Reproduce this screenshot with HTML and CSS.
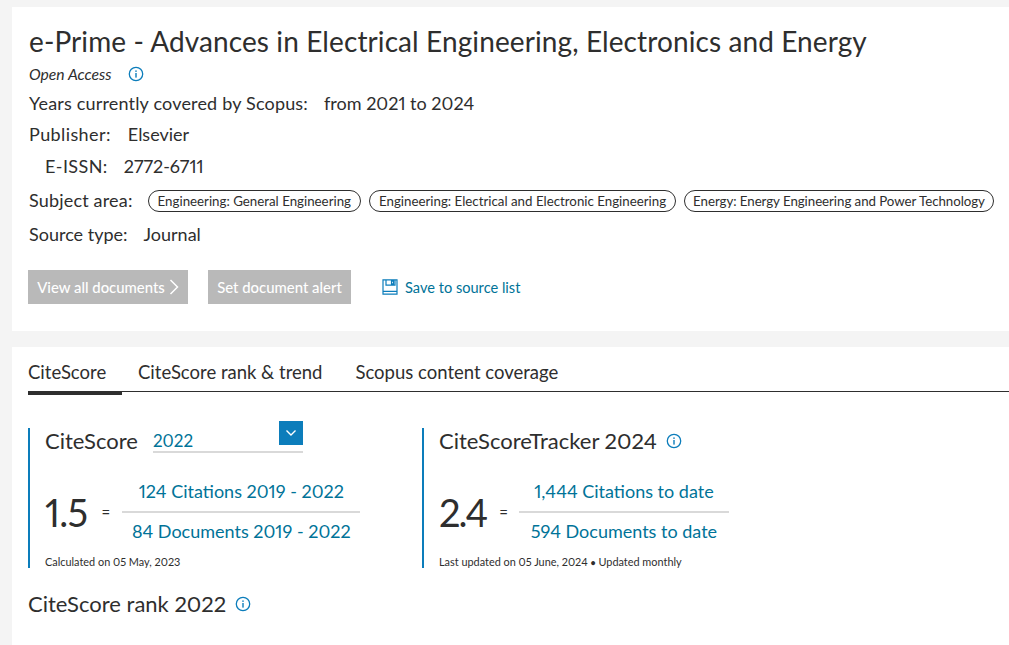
FILE: index.html
```html
<!DOCTYPE html>
<html lang="en">
<head>
<meta charset="utf-8">
<title>e-Prime - Scopus source details</title>
<link rel="stylesheet" href="styles.css">
</head>
<body>
<svg class="sprite" width="0" height="0" aria-hidden="true">
  <symbol id="info" viewBox="0 0 16 16">
    <circle cx="8" cy="8" r="6.7" fill="none" stroke="currentColor" stroke-width="1.3"/>
    <rect x="7.3" y="7" width="1.4" height="4.6" fill="currentColor"/>
    <rect x="7.3" y="4.4" width="1.4" height="1.5" fill="currentColor"/>
  </symbol>
</svg>
<main class="page">
  <section class="card head">
    <h1 class="title">e-Prime - Advances in Electrical Engineering, Electronics and Energy</h1>
    <div class="oa"><em>Open Access</em><svg class="info oa-info"><use href="#info"/></svg></div>
    <div class="row years"><span class="label">Years currently covered by Scopus:</span><span>from 2021 to 2024</span></div>
    <div class="row publisher"><span class="label">Publisher:</span><span>Elsevier</span></div>
    <div class="row issn"><span class="label">E-ISSN:</span><span class="issn-value">2772-6711</span></div>
    <div class="row subject"><span class="label">Subject area:</span>
      <div class="tags">
        <span class="tag">Engineering: General Engineering</span>
        <span class="tag">Engineering: Electrical and Electronic Engineering</span>
        <span class="tag">Energy: Energy Engineering and Power Technology</span>
      </div>
    </div>
    <div class="row stype"><span>Source type:</span><span>Journal</span></div>
    <div class="actions">
      <a class="btn btn-view">View all documents<svg class="chev" viewBox="0 0 10 16"><path d="M1.5 1 8.5 8 1.5 15" fill="none" stroke="currentColor" stroke-width="1.5"/></svg></a>
      <a class="btn btn-alert">Set document alert</a>
      <a class="save"><svg class="save-ic" viewBox="0 0 16 16"><path d="M1 .8h14v14.4H1z M4 .8v5.4h9V.8 M9.5 2.2h2v2.6h-2z M1 12.4h14" fill="none" stroke="currentColor" stroke-width="1.2"/></svg>Save to source list</a>
    </div>
  </section>

  <section class="card body">
    <nav class="tabs">
      <span class="tab active">CiteScore</span>
      <span class="tab">CiteScore rank &amp; trend</span>
      <span class="tab">Scopus content coverage</span>
    </nav>
    <div class="scores">
      <div class="score first">
        <div class="score-head">
          <h2>CiteScore</h2>
          <div class="select"><span>2022</span><span class="select-btn"><svg viewBox="0 0 12 8"><path d="M1.5 1.5 6 6l4.5-4.5" fill="none" stroke="currentColor" stroke-width="1.4"/></svg></span></div>
        </div>
        <div class="formula">
          <span class="value">1.5</span><span class="eq">=</span>
          <div class="fraction wide">
            <a>124 Citations 2019 - 2022</a>
            <a>84 Documents 2019 - 2022</a>
          </div>
        </div>
        <p class="note">Calculated on 05 May, 2023</p>
      </div>
      <div class="score second">
        <div class="score-head">
          <h2>CiteScoreTracker 2024</h2><svg class="info tracker-info"><use href="#info"/></svg>
        </div>
        <div class="formula">
          <span class="value">2.4</span><span class="eq">=</span>
          <div class="fraction narrow">
            <a>1,444 Citations to date</a>
            <a>594 Documents to date</a>
          </div>
        </div>
        <p class="note">Last updated on 05 June, 2024 <b class="dot">•</b> Updated monthly</p>
      </div>
    </div>
    <div class="rank"><h2>CiteScore rank 2022</h2><svg class="info rank-info"><use href="#info"/></svg></div>
  </section>
</main>
</body>
</html>
```

FILE: styles.css
```css
* { box-sizing: border-box; }
html, body { margin: 0; height: 100%; overflow: hidden; }
body {
  background: #f4f4f4;
  color: #2e2e2e;
  font-family: Lato, "Noto Sans", sans-serif;
  font-size: 18px;
  font-variant-numeric: proportional-nums;
}
.sprite { position: absolute; }
.page { padding: 7px 0 0 12px; display: flex; flex-direction: column; gap: 16px; height: 645px; }
.card { background: #fff; padding-left: 16px; }
.head { height: 324px; padding-top: 16px; }
.body { flex: 1; }

.title { margin: 0; padding-left: 1px; font-size: 28px; line-height: 36px; font-weight: 400; letter-spacing: .1px; white-space: nowrap; }
.oa { display: flex; align-items: center; height: 22px; margin-top: 4px; font-size: 15.7px; padding-left: 1px; }
.info { width: 16px; height: 16px; color: #0c7dbb; flex: none; }
.oa-info { margin-left: 16px; }

.row { display: flex; align-items: center; height: 32px; padding-left: 1px; white-space: nowrap; }
.label { letter-spacing: .18px; }
.years { gap: 16px; height: 31px; margin-top: 2px; }
.publisher { gap: 17px; height: 32px; }
.publisher .label, .issn .label { letter-spacing: .4px; }
.issn { gap: 16px; padding-left: 17px; height: 31px; }
.subject { gap: 15px; height: 37px; margin-top: 0; }
.stype { gap: 16px; height: 32px; }
.tags { display: flex; gap: 8px; margin-top: 2px; }
.tag {
  border: 1px solid #2e2e2e;
  border-radius: 11px;
  height: 22px;
  padding: 0 9px;
  font-size: 13.3px;
  line-height: 20px;
  white-space: nowrap;
}
.tag:last-child { padding: 0 8px; letter-spacing: -.05px; }

.actions { display: flex; align-items: center; margin-top: 20px; }
.btn {
  display: flex; align-items: center; justify-content: center;
  height: 34px; background: #b9b9b9; color: #fff; font-size: 14.9px; font-weight: 500;
}
.btn-view { width: 160px; margin-right: 20px; gap: 4px; }
.chev { width: 10px; height: 16px; }
.btn-alert { width: 143px; margin-right: 31px; }
.save { display: flex; align-items: center; gap: 7px; color: #007398; font-size: 14.6px; }
.save-ic { width: 16px; height: 16px; color: #0c7dbb; }

.tabs { display: flex; gap: 33px; height: 45px; border-bottom: 1px solid #2e2e2e; padding-top: 12px; font-size: 18.5px; }
.tab { height: 36px; line-height: 27px; }
.tab.active { border-bottom: 4px solid #2e2e2e; width: 94px; margin-right: -17px; }

.scores { display: flex; margin-top: 36px; }
.score { border-left: 2px solid #0c7dbb; height: 140px; padding-left: 15px; }
.first { width: 394px; }
.score-head { display: flex; align-items: center; height: 25px; }
h2 { margin: 0; font-size: 22px; font-weight: 400; line-height: 28px; white-space: nowrap; }
.select {
  position: relative; display: flex; align-items: flex-start;
  width: 150px; height: 25px; margin-left: 15px;
  border-bottom: 2px solid #d9d9d9; color: #007398; font-size: 17px; line-height: 26px;
}
.select-btn {
  position: absolute; right: 0; top: -7px; width: 24px; height: 24px;
  background: #0c7dbb; color: #fff; display: flex; align-items: center; justify-content: center;
}
.select-btn svg { width: 12px; height: 8px; }
.tracker-info { margin-left: 9px; }

.formula { display: flex; align-items: center; height: 78px; margin-top: 20px; }
.value { font-size: 38px; line-height: 44px; letter-spacing: -2px; }
.first .value { letter-spacing: -.7px; }
.eq { font-size: 15px; margin: 0 12px 0 14px; }
.second .eq { margin: 0 11px 0 13px; }
.fraction { display: flex; flex: none; flex-direction: column; align-items: center; color: #007398; font-size: 18px; }
.fraction a { height: 40px; line-height: 38px; white-space: nowrap; }
.fraction a:first-child { border-bottom: 2px solid #d9d9d9; align-self: stretch; text-align: center; height: 41px; }
.fraction a:last-child { line-height: 36px; }
.wide { width: 238px; }
.narrow { width: 210px; }
.note { margin: 3px 0 0; font-size: 10.9px; line-height: 16px; white-space: nowrap; }
.dot { font-size: 9px; }

.rank { display: flex; align-items: center; margin-top: 22px; }
.rank-info { margin-left: 9px; }
```
